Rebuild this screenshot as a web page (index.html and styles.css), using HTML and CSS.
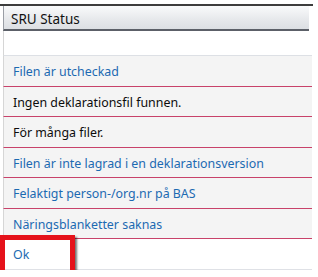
FILE: index.html
```html
<!DOCTYPE html>
<html lang="sv">
<head>
<meta charset="UTF-8">
<title>SRU Status</title>
<link rel="stylesheet" href="styles.css">
</head>
<body>

<div class="sru-lista">
    <div class="sru-rubrik">SRU Status</div>
    <div class="rad tom"></div>
    <div class="rad lank">Filen är utcheckad</div>
    <div class="rad">Ingen deklarationsfil funnen.</div>
    <div class="rad">För många filer.</div>
    <div class="rad lank">Filen är inte lagrad i en deklarationsversion</div>
    <div class="rad lank">Felaktigt person-/org.nr på BAS</div>
    <div class="rad lank">Näringsblanketter saknas</div>
    <div class="rad lank ok">Ok</div>
    <div class="markering"></div>
</div>

</body>
</html>
```

FILE: styles.css
```css
body {
    margin: 0;
    background: #fff;
    font-family: "Noto Sans", "Open Sans", sans-serif;
}
.sru-lista {
    position: relative;
    width: 313px;
    margin-top: 4px;
    border-top: 2px solid #3d3d3d;
}
.sru-rubrik {
    margin-left: 3px;
    width: 298px;
    height: 23px;
    line-height: 26px;
    padding-left: 7px;
    font-size: 13.5px;
    color: #111;
    background: linear-gradient(#f9fafb, #e6e8eb 60%, #dcdfe3);
    border-left: 1px solid #9a9ea5;
    border-bottom: 2px solid #5c6068;
}
.rad {
    margin-left: 3px;
    width: 299px;
    height: 29.5px;
    line-height: 32px;
    padding-left: 9px;
    font-size: 12.4px;
    color: #0c0c0c;
    background: #f4f4f4;
    border-left: 1px solid #d6d6d6;
    border-bottom: 1px solid #c8426a;
    box-shadow: 0 1px 0 #ecbccb;
    white-space: nowrap;
}
.rad.tom {
    height: 24px;
    background: #fff;
    border-bottom-color: #dde0e5;
    box-shadow: none;
}
.rad.lank {
    color: #1c6ab2;
}
.rad.ok {
    background: #fff;
    border-bottom-color: #dfe1e6;
    box-shadow: none;
}
.markering {
    position: absolute;
    left: 0;
    top: 229px;
    width: 65px;
    height: 30px;
    border: 5px solid #e5121b;
    box-shadow: 2px 2px 2px rgba(0, 0, 0, 0.55);
}
```
